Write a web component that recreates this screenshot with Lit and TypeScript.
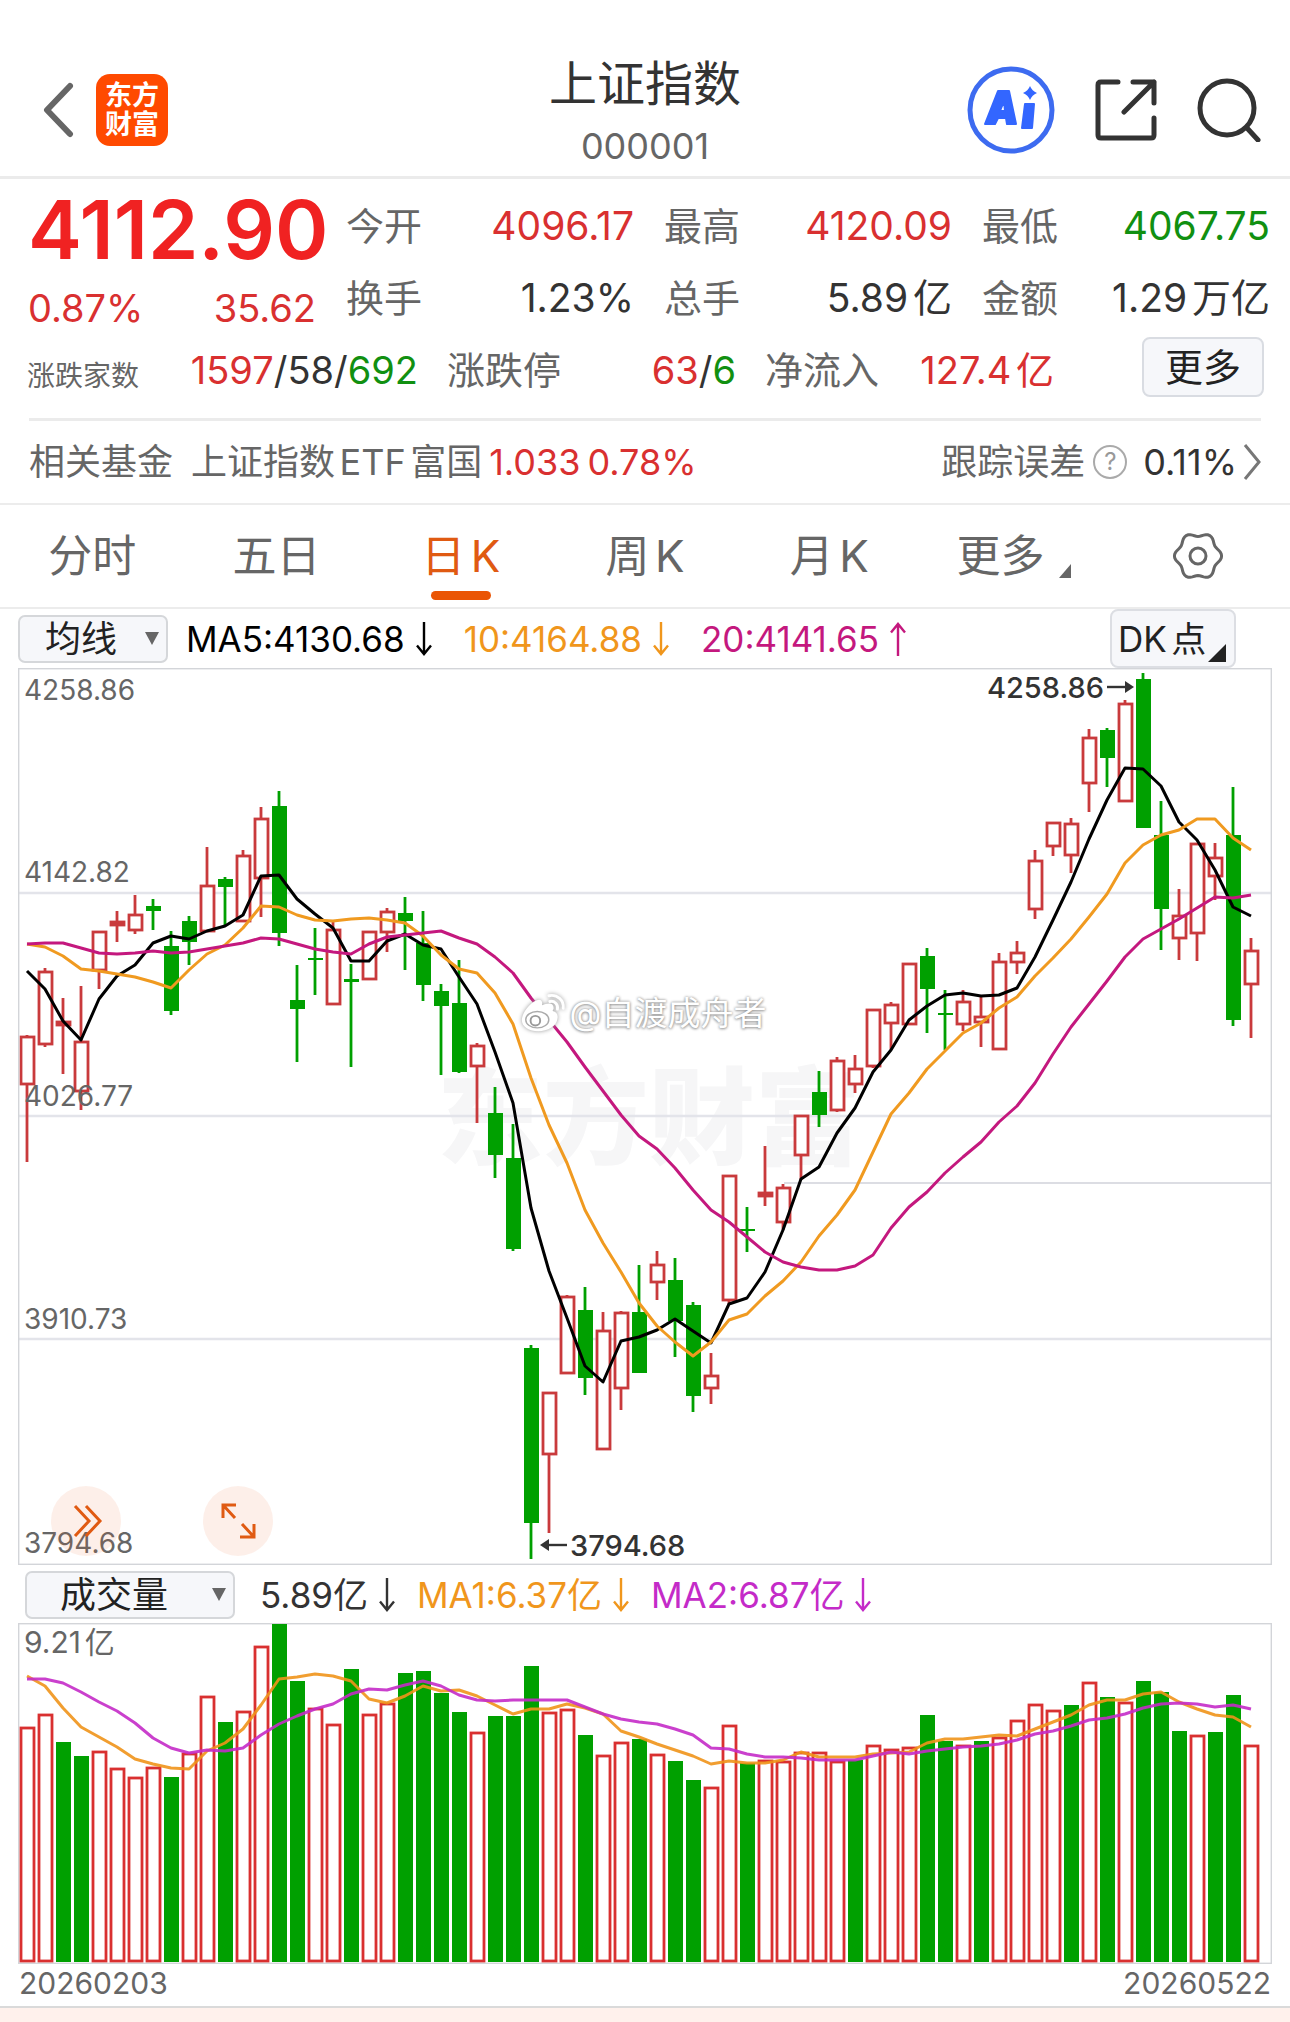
import { LitElement, css, html, svg } from "lit";
import { customElement, property, state } from "lit/decorators.js";
import { classMap } from "lit/directives/class-map.js";

/* Chart geometry, in plot units: one trading day every STEP units. */
const FIRST = 27;
const STEP = 18;
const BODY = 14;
const VOL_BASE = 1962;

type Candle = [kind: "r" | "g", high: number, top: number, bottom: number, low: number];

const CANDLES: Candle[] = [
  ["r", 1035, 1036, 1085, 1162], ["r", 968, 971, 1045, 1047], ["r", 998, 1021, 1026, 1074],
  ["r", 986, 1041, 1092, 1110], ["r", 931, 931, 971, 989], ["r", 911, 921, 926, 942],
  ["r", 895, 914, 931, 934], ["g", 899, 906, 911, 930], ["g", 931, 946, 1011, 1015],
  ["g", 916, 921, 942, 965], ["r", 847, 885, 932, 932], ["g", 877, 879, 887, 926],
  ["r", 850, 855, 922, 922], ["r", 807, 818, 879, 917], ["g", 791, 806, 933, 946],
  ["g", 965, 1000, 1009, 1062], ["g", 928, 958, 960, 995], ["r", 920, 929, 1005, 1005],
  ["g", 964, 979, 982, 1067], ["r", 931, 931, 980, 980], ["r", 908, 911, 933, 952],
  ["g", 897, 913, 921, 970], ["g", 911, 943, 985, 1001], ["g", 984, 991, 1006, 1075],
  ["g", 960, 1003, 1072, 1073], ["r", 1043, 1045, 1067, 1123], ["g", 1087, 1113, 1155, 1178],
  ["g", 1124, 1158, 1249, 1251], ["g", 1345, 1348, 1523, 1559], ["r", 1392, 1392, 1455, 1533],
  ["r", 1295, 1296, 1374, 1374], ["g", 1287, 1310, 1378, 1395], ["r", 1312, 1330, 1450, 1450],
  ["r", 1311, 1312, 1389, 1410], ["g", 1265, 1312, 1373, 1373], ["r", 1251, 1264, 1283, 1300],
  ["g", 1258, 1280, 1321, 1357], ["g", 1302, 1305, 1396, 1412], ["r", 1353, 1375, 1389, 1404],
  ["r", 1175, 1175, 1301, 1304], ["g", 1207, 1229, 1231, 1252], ["r", 1146, 1192, 1197, 1206],
  ["r", 1184, 1187, 1223, 1230], ["r", 1115, 1115, 1156, 1180], ["g", 1071, 1092, 1115, 1127],
  ["r", 1057, 1060, 1111, 1112], ["r", 1055, 1068, 1085, 1093], ["r", 1009, 1009, 1067, 1068],
  ["r", 1002, 1004, 1024, 1049], ["r", 963, 963, 1025, 1025], ["g", 948, 956, 989, 1033],
  ["g", 990, 1013, 1015, 1050], ["r", 990, 1001, 1025, 1031], ["r", 996, 1016, 1023, 1047],
  ["r", 953, 961, 1050, 1050], ["r", 941, 952, 963, 974], ["r", 850, 860, 910, 919],
  ["r", 822, 822, 847, 856], ["r", 818, 823, 856, 873], ["r", 729, 737, 784, 812],
  ["g", 728, 730, 758, 787], ["r", 700, 703, 802, 802], ["g", 673, 679, 828, 828],
  ["g", 801, 835, 909, 950], ["r", 889, 915, 939, 960], ["r", 843, 843, 934, 961],
  ["r", 843, 857, 877, 900], ["g", 787, 835, 1020, 1026], ["r", 938, 950, 985, 1038],
];

const MA5 = [
  971, 989, 1021, 1040, 999, 976, 965, 943, 936, 939, 931, 926, 915, 876, 875, 899, 914, 928, 961, 961,
  941, 934, 945, 949, 977, 1004, 1052, 1103, 1208, 1271, 1318, 1366, 1382, 1341, 1337, 1330, 1319, 1331,
  1343, 1304, 1298, 1272, 1230, 1179, 1167, 1133, 1108, 1072, 1050, 1020, 1006, 995, 993, 996, 995, 988,
  957, 920, 882, 839, 800, 768, 769, 786, 822, 840, 870, 907, 916,
];
const MA10 = [
  944, 947, 956, 969, 971, 974, 977, 982, 988, 970, 954, 945, 928, 906, 907, 915, 920, 921, 919, 918,
  920, 923, 936, 955, 969, 973, 993, 1024, 1078, 1125, 1163, 1210, 1243, 1272, 1303, 1326, 1342, 1356,
  1342, 1320, 1314, 1296, 1281, 1262, 1236, 1215, 1190, 1152, 1114, 1093, 1069, 1051, 1033, 1023, 1008,
  997, 976, 958, 939, 917, 894, 863, 845, 835, 830, 819, 819, 838, 850,
];
const MA20 = [
  944, 943, 943, 948, 953, 954, 953, 951, 953, 952, 949, 946, 943, 938, 939, 944, 949, 952, 954, 944,
  937, 935, 933, 931, 938, 944, 957, 973, 998, 1020, 1042, 1067, 1091, 1115, 1136, 1149, 1168, 1190,
  1210, 1222, 1237, 1252, 1262, 1267, 1270, 1270, 1266, 1255, 1228, 1207, 1192, 1173, 1157, 1142, 1122,
  1106, 1083, 1054, 1027, 1004, 981, 957, 939, 929, 919, 908, 897, 898, 895,
];
const VOLUME = [
  1727, 1714, 1742, 1756, 1751, 1768, 1777, 1767, 1777, 1753, 1696, 1722, 1711, 1646, 1624, 1681, 1708,
  1724, 1669, 1714, 1703, 1673, 1671, 1693, 1712, 1732, 1716, 1716, 1666, 1712, 1709, 1735, 1755, 1742,
  1739, 1754, 1761, 1780, 1787, 1725, 1763, 1760, 1761, 1752, 1752, 1761, 1760, 1745, 1749, 1747, 1715,
  1741, 1745, 1741, 1737, 1720, 1704, 1710, 1705, 1682, 1697, 1702, 1681, 1692, 1731, 1735, 1732, 1695,
  1745,
];
const VOLUME_KIND = "rrggrrrrgrrgrrggrrgrrggggrgggrrgrrgrggrrgrrrrrgrrrggrgrrrrgrgrgggrggr";
const VMA1 = [
  1676, 1686, 1708, 1727, 1737, 1747, 1759, 1764, 1768, 1769, 1751, 1743, 1729, 1705, 1679, 1677, 1674,
  1676, 1681, 1699, 1703, 1696, 1686, 1691, 1690, 1696, 1705, 1714, 1709, 1709, 1704, 1708, 1714, 1731,
  1737, 1744, 1750, 1756, 1764, 1761, 1763, 1763, 1760, 1752, 1757, 1757, 1757, 1754, 1753, 1752, 1743,
  1739, 1739, 1737, 1735, 1736, 1729, 1722, 1715, 1705, 1700, 1700, 1694, 1692, 1702, 1709, 1715, 1717,
  1727,
];
const VMA2 = [
  1679, 1679, 1683, 1692, 1702, 1711, 1723, 1738, 1748, 1753, 1750, 1751, 1748, 1735, 1724, 1716, 1709,
  1704, 1694, 1689, 1690, 1685, 1681, 1686, 1695, 1700, 1701, 1700, 1700, 1700, 1700, 1707, 1714, 1719,
  1722, 1724, 1729, 1735, 1748, 1749, 1754, 1757, 1757, 1758, 1760, 1760, 1760, 1756, 1752, 1754, 1751,
  1749, 1747, 1746, 1744, 1740, 1734, 1731, 1726, 1720, 1718, 1714, 1708, 1704, 1703, 1704, 1707, 1705,
  1709,
];

const xAt = (i: number) => FIRST + STEP * i;
const points = (ys: number[]) => ys.map((y, i) => `${xAt(i)},${y}`).join(" ");

/* Six-lobed outline of the settings icon. */
const gearPath =
  Array.from({ length: 72 }, (_, i) => {
    const a = (i * Math.PI) / 36;
    const r = 21.6 + 2 * Math.cos(6 * a);
    return `${i ? "L" : "M"}${(25 + r * Math.cos(a)).toFixed(2)} ${(25 + r * Math.sin(a)).toFixed(2)}`;
  }).join("") + "Z";

const fontStack = css`"Inter", "Noto Sans CJK SC", sans-serif`;

@customElement("trend-arrow")
class TrendArrow extends LitElement {
  @property({ type: Boolean }) up = false;
  static styles = css`
    :host { display: inline-flex; flex: none; }
    .arrow { width: 16px; height: 34px; fill: none; stroke: currentColor; stroke-width: 2.4; }
  `;
  render() {
    return html`<svg class="arrow" viewBox="0 0 16 34" role="img" aria-label=${this.up ? "升" : "降"}>
      ${this.up ? svg`<path d="M8 34V2M1 10.500 8 2l7 8.500" />` : svg`<path d="M8 0v32M1 23.500 8 32l7-8.500" />`}
    </svg>`;
  }
}

@customElement("price-chart")
class PriceChart extends LitElement {
  static styles = css`
    :host { display: block; position: relative; font-family: ${fontStack}; }
    .plot { display: block; width: 100%; height: auto; }
    .frame { fill: none; stroke: #d3d5d9; stroke-width: 1.4; }
    .grid { stroke: #e3e4ea; stroke-width: 2.6; }
    .gap { stroke: #dcdde3; stroke-width: 2; }
    .r { fill: #fff; stroke: #c93a3c; stroke-width: 2.8; }
    .r.solid { fill: #c93a3c; }
    .g { fill: #00a000; stroke: #00a000; stroke-width: 2.8; }
    .g-body { fill: #00a000; }
    .line { fill: none; stroke-width: 3; stroke-linejoin: round; }
    .ma5 { stroke: #000; }
    .ma10 { stroke: #f09a20; }
    .ma20 { stroke: #c4187e; }
    .axis { font-size: 28px; fill: #666; }
    .mark { font-size: 29px; font-weight: 500; fill: #333; }
    .mark-line { stroke: #333; stroke-width: 2.4; }
    .mark-head { fill: #333; }
    .brand { font-size: 106px; font-weight: 900; fill: #f6f6f7; }
    .float { position: absolute; bottom: 9px; width: 70px; height: 70px; padding: 0; border: 0; border-radius: 50%;
      background: rgba(240, 100, 40, 0.1); display: grid; place-items: center; }
    .next { left: 33px; }
    .expand { left: 185px; }
    .float svg { width: 40px; height: 40px; fill: none; stroke: #e05a12; stroke-width: 3; }
    .sign { position: absolute; left: 40%; top: 36%; display: flex; align-items: center; gap: 2px;
      font-size: 33px; line-height: 44px; color: #fff; text-shadow: 0 0 3px #888, 0 1px 3px #aaa; white-space: nowrap; }
    .sign svg { width: 48px; height: 42px; filter: drop-shadow(0 0 2px #999); }
  `;

  private candle([kind, high, top, bottom, low]: Candle, i: number) {
    const x = xAt(i);
    const left = x - BODY / 2;
    if (kind === "g") {
      return svg`<path class="g" d="M${x} ${high}V${low}" />
        <rect class="g-body" x=${left} y=${top} width=${BODY + 1} height=${bottom - top} />`;
    }
    return svg`<path class="r" d="M${x} ${high}V${top}M${x} ${bottom}V${low}" />
      <rect class=${classMap({ r: true, solid: bottom - top < 6 })} x=${left + 1} y=${top + 1}
        width=${BODY - 1} height=${bottom - top - 2} />`;
  }

  render() {
    return html`
      <svg class="plot" viewBox="18 668 1254 897" role="img" aria-label="日K线图">
        <text class="brand" x="437" y="1156">东方财富</text>
        ${[893, 1116, 1339].map((y) => svg`<path class="grid" d="M18 ${y}H1271" />`)}
        <path class="gap" d="M784 1183H1271" />
        ${CANDLES.map((c, i) => this.candle(c, i))}
        <polyline class="line ma5" points=${points(MA5)} />
        <polyline class="line ma10" points=${points(MA10)} />
        <polyline class="line ma20" points=${points(MA20)} />
        <rect class="frame" x="18.700" y="668.700" width="1252.600" height="895.600" />
        <text class="axis" x="24" y="700">4258.86</text>
        <text class="axis" x="24" y="882">4142.82</text>
        <text class="axis" x="24" y="1106">4026.77</text>
        <text class="axis" x="24" y="1329">3910.73</text>
        <text class="axis" x="24" y="1553">3794.68</text>
        <text class="mark" x="1104" y="698" text-anchor="end">4258.86</text>
        <path class="mark-line" d="M1107 687H1127" />
        <path class="mark-head" d="M1134 687l-9-6v12z" />
        <text class="mark" x="570" y="1556">3794.68</text>
        <path class="mark-line" d="M547 1545H567" />
        <path class="mark-head" d="M540 1545l9-6v12z" />
      </svg>
      <div class="sign">
        <svg viewBox="0 0 50 42" aria-hidden="true">
          <path fill="#fff" d="M17 8c4-2 7 0 6 5 6-3 12-3 12 3 0 1-1 2-1 3 4 1 6 4 5 8-1 8-10 13-20 13S1 35 2 27C3 20 10 11 17 8z" />
          <ellipse cx="18" cy="28" rx="12" ry="8.500" fill="#fff" stroke="#aaa" stroke-width="1.500" />
          <circle cx="16" cy="29" r="5" fill="none" stroke="#999" stroke-width="2" />
          <path d="M31 9c5-1 9 3 8 8M30 3c9-2 16 5 15 13" fill="none" stroke="#fff" stroke-width="3" stroke-linecap="round" />
        </svg>
        <span>@自渡成舟者</span>
      </div>
      <button class="float next" type="button" aria-label="展开">
        <svg viewBox="0 0 40 40"><path d="M9 5l14 15L9 35M20 5l14 15-14 15" /></svg>
      </button>
      <button class="float expand" type="button" aria-label="全屏">
        <svg viewBox="0 0 40 40"><path d="M18 4H5v13M5 4l12 13M22 36h14V23M36 36 24 23" /></svg>
      </button>
    `;
  }
}

@customElement("volume-chart")
class VolumeChart extends LitElement {
  static styles = css`
    :host { display: block; font-family: ${fontStack}; }
    .plot { display: block; width: 100%; height: auto; }
    .frame { fill: none; stroke: #d3d5d9; stroke-width: 1.4; }
    .r { fill: #fff; stroke: #d93030; stroke-width: 2.8; }
    .g { fill: #00a000; }
    .line { fill: none; stroke-width: 3; stroke-linejoin: round; opacity: 0.9; }
    .vma1 { stroke: #f0941a; }
    .vma2 { stroke: #c42bc8; }
    .axis { font-size: 30px; fill: #666; text-autospace: normal; }
  `;
  render() {
    return html`<svg class="plot" viewBox="18 1623 1254 341" role="img" aria-label="成交量">
      <rect class="frame" x="18.700" y="1623.700" width="1252.600" height="339.600" />
      ${VOLUME.map((y, i) =>
        VOLUME_KIND[i] === "g"
          ? svg`<rect class="g" x=${xAt(i) - 7} y=${y} width="15" height=${VOL_BASE - y} />`
          : svg`<rect class="r" x=${xAt(i) - 6} y=${y + 1} width="13" height=${VOL_BASE - y - 2} />`
      )}
      <polyline class="line vma1" points=${points(VMA1)} />
      <polyline class="line vma2" points=${points(VMA2)} />
      <text class="axis" x="24" y="1653">9.21亿</text>
    </svg>`;
  }
}

@customElement("app-root")
class AppRoot extends LitElement {
  @state() private tab = "日K";

  static styles = css`
    :host { display: block; min-height: 100vh; background: #fff; color: #333; font-family: ${fontStack};
      font-size: 36px; line-height: 48px; font-weight: 400; white-space: nowrap; text-autospace: normal; }
    * { box-sizing: border-box; }
    button, select { font: inherit; color: inherit; margin: 0; }
    button { padding: 0; border: 0; background: none; }
    a { color: inherit; text-decoration: none; }
    h1, dl, dd, dt { margin: 0; font-weight: 400; }
    .icon { display: block; fill: none; stroke: #333; stroke-width: 5; }
    .up { color: #d93030; }
    .down { color: #119011; }
    .label { color: #666; }

    .top { display: grid; grid-template-columns: 1fr auto 1fr; align-items: center; padding: 44px 29px 0;
      height: 179px; border-bottom: 3px solid #ebebeb; }
    .lead, .tools { display: flex; align-items: center; }
    .lead { gap: 20px; padding-left: 11px; }
    .tools { gap: 40px; justify-content: flex-end; }
    .back svg { width: 36px; height: 56px; stroke: #666; stroke-width: 6; stroke-linecap: round; stroke-linejoin: round; }
    .logo { display: grid; align-content: center; justify-items: center; width: 72px; height: 72px; border-radius: 14px;
      background: #ff4a00; color: #fff; font-size: 27px; line-height: 29px; font-weight: 700; }
    .title { padding-top: 8px; text-align: center; }
    .title h1 { font-size: 48px; line-height: 64px; }
    .code { font-size: 36px; line-height: 60px; color: #666; }
    .ai { display: block; width: 88px; height: 88px; }
    .share { width: 62px; height: 62px; }
    .search { width: 64px; height: 64px; }

    .quote { display: grid; grid-template-columns: repeat(4, minmax(0, 1fr)); grid-auto-rows: 72px; column-gap: 30px;
      align-items: center; padding: 11px 20px 0 28px; font-size: 39px; }
    .last { grid-row: span 2; align-self: stretch; display: flex; flex-direction: column; justify-content: space-between; }
    .price { font-size: 81px; line-height: 80px; font-weight: 600; color: #f02222; }
    .stat { display: flex; justify-content: space-between; align-items: center; }
    .stat .label { font-size: 38px; }
    .change { display: flex; justify-content: space-between; font-size: 38px; line-height: 52px; }
    .breadth { display: grid; grid-template-columns: 391fr 289fr 289fr 181fr; column-gap: 29px; align-items: center;
      height: 72px; padding: 0 26px 0 27px; font-size: 38px; }
    .stat .small { font-size: 28px; padding-top: 12px; }
    .more { justify-self: end; width: 122px; height: 60px; margin-bottom: 6px; border: 2px solid #d9dce2; border-radius: 8px;
      background: #f6f7fa; font-size: 38px; line-height: 52px; color: #222; }

    .fund { display: flex; align-items: center; height: 85px; margin: 12px 29px 0; border-top: 3px solid #ebebeb; font-size: 36px; }
    .fund a { display: flex; }
    .name { margin-left: 18px; }
    .fund-price { margin: 0 7px; }
    .error { margin-left: auto; display: flex; align-items: center; }
    .help { margin: 0 16px 0 8px; }
    .help-ring { display: grid; place-items: center; width: 34px; height: 34px; border: 2px solid #aaa; border-radius: 50%;
      font-size: 24px; line-height: 30px; color: #999; }
    .go { width: 18px; height: 36px; margin-left: 6px; stroke: #777; stroke-width: 3; }

    .tabs { display: grid; grid-template-columns: repeat(7, 1fr); height: 106px; border-top: 2px solid #ececec;
      border-bottom: 2px solid #ececec; font-size: 44px; color: #666; }
    .tab { position: relative; display: flex; align-items: center; justify-content: center; }
    .tab.on { color: #e05a12; }
    .tab.on::after { content: ""; position: absolute; bottom: 7px; width: 60px; height: 9px; border-radius: 5px; background: #ea5504; }
    .corner { width: 12px; height: 14px; margin: 30px 0 0 14px; fill: currentColor; }
    .gear { width: 50px; height: 50px; stroke: #666; stroke-width: 3; }

    .bar { display: flex; align-items: center; height: 59px; padding: 0 54px 0 18px; }
    .pick { position: relative; display: block; flex: none; }
    .pick select { appearance: none; display: block; width: 150px; height: 48px; padding: 0 0 0 25px; border: 2px solid #d5d7da;
      border-radius: 7px; background: #f6f7fa; font-size: 36px; line-height: 44px; color: #222; }
    .pick svg { position: absolute; right: 9px; top: 17px; width: 14px; height: 13px; fill: #666; pointer-events: none; }
    .figure { display: flex; align-items: center; gap: 11px; font-size: 35px; }
    .figures { display: flex; gap: 32px; margin-left: 18px; text-autospace: no-autospace; }
    .c5 { color: #000; }
    .c10 { color: #f0961c; }
    .c20 { color: #c4187e; }
    .cv2 { color: #c42bc8; }
    .dk { display: flex; align-items: center; width: 126px; height: 59px; margin-left: auto; padding: 0 8px 0 6px; border: 2px solid #dcdee3;
      border-radius: 8px; background: #f6f7fa; color: #222; font-size: 35px; }
    .dk svg { flex: none; width: 18px; height: 18px; margin: 28px 0 0 auto; fill: #222; }
    .volbar { height: 58px; padding-top: 2px; padding-left: 25px; }
    .volbar .pick select { width: 210px; padding-left: 33px; }
    .volbar .figures { gap: 22px; margin-left: 25px; }

    .chart { display: block; margin: 0 18px; }
    .dates { display: flex; justify-content: space-between; height: 42px; margin: 0 19px; font-size: 30px; line-height: 38px; color: #666; }
    .foot { height: 16px; border-top: 2px solid #dadada; background: #fff1ec; }
  `;

  private stat(label: string, value: string, tone = "") {
    return html`<dl class="stat"><dt class="label">${label}</dt><dd class=${tone}>${value}</dd></dl>`;
  }

  private pick(id: string, label: string, value: string) {
    return html`<label class="pick" for=${id}>
      <select id=${id} aria-label=${label}><option>${value}</option></select>
      <svg viewBox="0 0 14 13" aria-hidden="true"><path d="M0 0h14L7 13z" /></svg>
    </label>`;
  }

  render() {
    return html`
      <header class="top">
        <div class="lead">
          <button class="back" type="button" aria-label="返回">
            <svg class="icon" viewBox="0 0 36 56"><path d="M30 4 7 28l23 24" /></svg>
          </button>
          <div class="logo"><span>东方</span><span>财富</span></div>
        </div>
        <div class="title"><h1>上证指数</h1><div class="code">000001</div></div>
        <div class="tools">
          <button type="button" aria-label="Ai">
            <svg class="ai" viewBox="0 0 88 88">
              <circle cx="44" cy="44" r="41" fill="#fff" stroke="#3d6bf0" stroke-width="5" />
              <path fill="#3366ff" fill-rule="evenodd" stroke="#3366ff" stroke-width="2" stroke-linejoin="round"
                d="M31 25h11l7 33h-9l-1-6h-8l-3 6h-10zM37 35l-4 10h5z" />
              <path fill="#3366ff" stroke="#3366ff" stroke-width="2" stroke-linejoin="round" d="M58 38h9l-2 24h-10z" />
              <path fill="#3366ff" d="M63 20q2 5 7 7-5 2-7 7-2-5-7-7 5-2 7-7z" />
            </svg>
          </button>
          <button type="button" aria-label="分享">
            <svg class="icon share" viewBox="0 0 62 62" stroke-linecap="round" stroke-linejoin="round">
              <path d="M23 3H6q-3 0-3 3v50q0 3 3 3h50q3 0 3-3V39M38 3h21v21M59 3 29 33" />
            </svg>
          </button>
          <button type="button" aria-label="搜索">
            <svg class="icon search" viewBox="0 0 64 64" stroke-linecap="round">
              <circle cx="30" cy="30" r="27" /><path d="M50 50l11 12" />
            </svg>
          </button>
        </div>
      </header>

      <section class="quote">
        <div class="last">
          <div class="price">4112.90</div>
          <div class="change up"><span>0.87%</span><span>35.62</span></div>
        </div>
        ${this.stat("今开", "4096.17", "up")} ${this.stat("最高", "4120.09", "up")} ${this.stat("最低", "4067.75", "down")}
        ${this.stat("换手", "1.23%")} ${this.stat("总手", "5.89亿")} ${this.stat("金额", "1.29万亿")}
      </section>
      <section class="breadth">
        <dl class="stat"><dt class="label small">涨跌家数</dt>
          <dd><span class="up">1597</span>/58/<span class="down">692</span></dd></dl>
        <dl class="stat"><dt class="label">涨跌停</dt><dd><span class="up">63</span>/<span class="down">6</span></dd></dl>
        ${this.stat("净流入", "127.4亿", "up")}
        <button class="more" type="button">更多</button>
      </section>

      <section class="fund">
        <a href="#fund">
          <span class="label">相关基金</span><span class="label name">上证指数ETF富国</span>
          <span class="up fund-price">1.033</span><span class="up">0.78%</span>
        </a>
        <div class="error">
          <span class="label">跟踪误差</span>
          <button class="help" type="button" aria-label="跟踪误差说明"><span class="help-ring">?</span></button>
          <span>0.11%</span>
          <svg class="icon go" viewBox="0 0 18 36" aria-hidden="true"><path d="M2 1l14 17L2 35" /></svg>
        </div>
      </section>

      <nav class="tabs">
        ${["分时", "五日", "日K", "周K", "月K", "更多"].map(
          (t) => html`<button type="button" class=${classMap({ tab: true, on: this.tab === t })} @click=${() => (this.tab = t)}>
            ${t}${t === "更多" ? html`<svg class="corner" viewBox="0 0 12 14" aria-hidden="true"><path d="M12 0v14H0z" /></svg>` : ""}
          </button>`
        )}
        <button class="tab" type="button" aria-label="设置">
          <svg class="icon gear" viewBox="0 0 50 50"><path d=${gearPath} /><circle cx="25" cy="25" r="8" /></svg>
        </button>
      </nav>

      <div class="bar">
        ${this.pick("overlay", "主图指标", "均线")}
        <div class="figures">
          <span class="figure c5">MA5:4130.68<trend-arrow></trend-arrow></span>
          <span class="figure c10">10:4164.88<trend-arrow></trend-arrow></span>
          <span class="figure c20">20:4141.65<trend-arrow up></trend-arrow></span>
        </div>
        <button class="dk" type="button">DK点<svg viewBox="0 0 18 18" aria-hidden="true"><path d="M18 0v18H0z" /></svg></button>
      </div>
      <price-chart class="chart"></price-chart>

      <div class="bar volbar">
        ${this.pick("indicator", "副图指标", "成交量")}
        <div class="figures">
          <span class="figure">5.89亿<trend-arrow></trend-arrow></span>
          <span class="figure c10">MA1:6.37亿<trend-arrow></trend-arrow></span>
          <span class="figure cv2">MA2:6.87亿<trend-arrow></trend-arrow></span>
        </div>
      </div>
      <volume-chart class="chart"></volume-chart>
      <div class="dates"><span>20260203</span><span>20260522</span></div>
      <div class="foot"></div>
    `;
  }
}
